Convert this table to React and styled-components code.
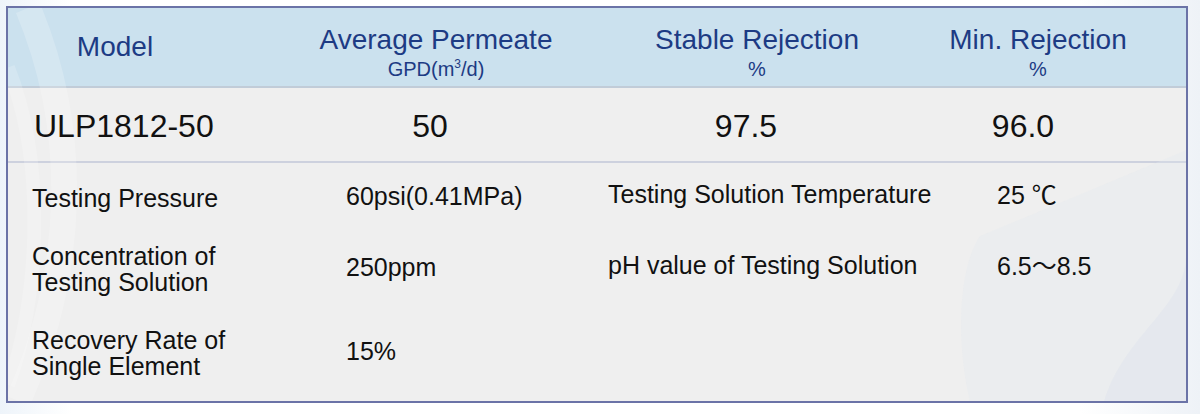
import styled, { createGlobalStyle } from "styled-components";

const GlobalStyle = createGlobalStyle`
    html, body {
        margin: 0;
        padding: 0;
        background: #ffffff;
    }
    body {
        font-family: "Liberation Sans", Arial, "Noto Sans CJK SC", sans-serif;
    }
`;

const header = [
    { title: "Model" },
    { title: "Average Permeate", unit: <>GPD(m<sup>3</sup>/d)</> },
    { title: "Stable Rejection", unit: "%" },
    { title: "Min. Rejection", unit: "%" },
];

const specs = [
    { label: "Testing Pressure", value: "60psi(0.41MPa)", label2: "Testing Solution Temperature", value2: "25 ℃" },
    { label: ["Concentration of", "Testing Solution"], value: "250ppm", label2: "pH value of Testing Solution", value2: "6.5～8.5" },
    { label: ["Recovery Rate of", "Single Element"], value: "15%" },
];

const App = () => {
    return (
        <Page>
            <GlobalStyle />
            <Panel>
                <Deco viewBox="0 0 1182 396" preserveAspectRatio="none">
                    <path d="M20 0 C 70 120, 70 260, 10 396" stroke="#ffffff" strokeWidth="26" fill="none" opacity="0.2" />
                    <path d="M0 60 C 40 160, 30 300, 0 380" stroke="#ffffff" strokeWidth="14" fill="none" opacity="0.18" />
                    <path d="M965 396 C 950 330, 955 260, 975 230 L 1190 140 L 1190 396 Z" fill="#e2e7ef" opacity="0.3" />
                    <path d="M1100 396 C 1120 330, 1182 300, 1182 250 L 1182 396 Z" fill="#d8dfea" opacity="0.3" />
                </Deco>

                <HeaderRow>
                    {header.map((h, i) => (
                        <HeadCell key={h.title} $twoLine={!!h.unit} $shift={i === 3 ? 26 : 0}>
                            <HeadTitle>{h.title}</HeadTitle>
                            {h.unit && <HeadUnit>{h.unit}</HeadUnit>}
                        </HeadCell>
                    ))}
                </HeaderRow>

                <ModelRow>
                    <ModelCell $align="left">ULP1812-50</ModelCell>
                    <ModelCell>50</ModelCell>
                    <ModelCell>97.5</ModelCell>
                    <ModelCell $shift={6}>96.0</ModelCell>
                </ModelRow>

                <SpecGrid>
                    {specs.map((row, i) => (
                        <SpecRow key={i}>
                            <SpecText>
                                {Array.isArray(row.label)
                                    ? row.label.map((l) => <span key={l}>{l}</span>)
                                    : row.label}
                            </SpecText>
                            <SpecText $dy={-2}>{row.value}</SpecText>
                            <SpecText $dy={-4}>{row.label2}</SpecText>
                            <SpecText $dy={-3}>{row.value2}</SpecText>
                        </SpecRow>
                    ))}
                </SpecGrid>
            </Panel>
        </Page>
    );
};

export default App;

const Page = styled.div`
    width: 1200px;
    height: 414px;
    padding: 6px 0 0 6px;
    box-sizing: border-box;
    background: linear-gradient(90deg, #eef4fa 0%, #ffffff 6%, #ffffff 90%, #eef2f7 100%);
`;

const Panel = styled.div`
    position: relative;
    width: 1182px;
    height: 397px;
    box-sizing: border-box;
    border: 2px solid #6b73a7;
    background: #efefef;
    display: flex;
    flex-direction: column;
    overflow: hidden;
`;

const HeaderRow = styled.div`
    display: grid;
    grid-template-columns: 214px 428px 214px 1fr;
    height: 78px;
    background: #cbe1ee;
    border-bottom: 2px solid #c1ccd8;
    color: #1d3b84;
`;

const HeadCell = styled.div`
    position: relative;
    z-index: 1;
    display: flex;
    flex-direction: column;
    align-items: center;
    justify-content: center;
    padding-top: ${(p) => (p.$twoLine ? 14 : 0)}px;
    padding-left: ${(p) => p.$shift}px;
`;

const HeadTitle = styled.div`
    font-size: 28px;
    line-height: 30px;
`;

const HeadUnit = styled.div`
    font-size: 20px;
    line-height: 28px;

    sup {
        font-size: 12px;
        line-height: 0;
        vertical-align: 8px;
    }
`;

const ModelRow = styled.div`
    display: grid;
    grid-template-columns: 214px 416px 216px 1fr;
    height: 73px;
    align-items: center;
    border-bottom: 2px solid #cdd1de;
    color: #111;
    font-size: 32px;
`;

const ModelCell = styled.div`
    position: relative;
    z-index: 1;
    text-align: ${(p) => (p.$align === "left" ? "left" : "center")};
    padding-left: ${(p) => (p.$align === "left" ? 26 : p.$shift || 0)}px;
    padding-top: 4px;
`;

const SpecGrid = styled.div`
    flex: 1;
    display: grid;
    grid-template-rows: 70px 72px 1fr;
    padding-left: 24px;
    color: #111;
`;

const SpecRow = styled.div`
    display: grid;
    grid-template-columns: 314px 262px 389px 1fr;
    align-items: center;
`;

const SpecText = styled.div`
    position: relative;
    z-index: 1;
    display: flex;
    flex-direction: column;
    font-size: 25px;
    line-height: 26px;
    transform: translateY(${(p) => p.$dy || 0}px);
`;

const Deco = styled.svg`
    position: absolute;
    z-index: 0;
    inset: 0;
    width: 100%;
    height: 100%;
    pointer-events: none;
`;
